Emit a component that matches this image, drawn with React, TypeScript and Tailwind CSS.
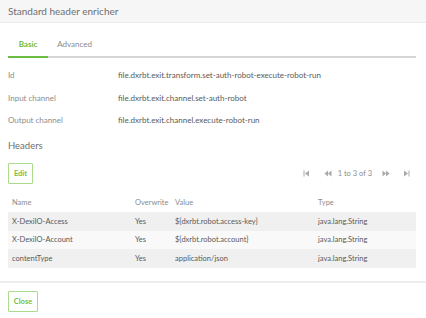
import React from "react";

const rows = [
  { name: "X-DexiIO-Access", ow: "Yes", value: "${dxrbt.robot.access-key}", type: "java.lang.String" },
  { name: "X-DexiIO-Account", ow: "Yes", value: "${dxrbt.robot.account}", type: "java.lang.String" },
  { name: "contentType", ow: "Yes", value: "application/json", type: "java.lang.String" },
];

const First = () => (
  <svg width="7" height="7" viewBox="0 0 7 7"><rect x="0.5" y="0.5" width="1" height="6" fill="#aaa" /><path d="M6 0.5 L2 3.5 L6 6.5 Z" fill="#aaa" /></svg>
);
const Prev = () => (
  <svg width="8" height="7" viewBox="0 0 8 7"><path d="M4 0.5 L0.5 3.5 L4 6.5 Z" fill="#aaa" /><path d="M7.5 0.5 L4 3.5 L7.5 6.5 Z" fill="#aaa" /></svg>
);
const Next = () => (
  <svg width="8" height="7" viewBox="0 0 8 7"><path d="M0.5 0.5 L4 3.5 L0.5 6.5 Z" fill="#aaa" /><path d="M4 0.5 L7.5 3.5 L4 6.5 Z" fill="#aaa" /></svg>
);
const Last = () => (
  <svg width="7" height="7" viewBox="0 0 7 7"><path d="M1 0.5 L5 3.5 L1 6.5 Z" fill="#aaa" /><rect x="5.5" y="0.5" width="1" height="6" fill="#aaa" /></svg>
);

export default function App() {
  return (
    <div className="w-[426px] h-[318px] bg-white overflow-hidden" style={{ fontFamily: "Lato, 'Noto Sans', sans-serif" }}>
      <div className="h-[23px] bg-[#f6f6f6] border-b border-[#ebebeb] flex items-center px-[8px] text-[10px] text-[#6f6f6f]">
        Standard header enricher
      </div>
      <div className="px-[8px]">
        <div className="flex h-[35px] items-end border-b-2 border-[#d6d6d6] w-[408px]">
          <div className="w-[40px] flex justify-center pb-[6px] text-[8px] font-bold text-[#6cbd45] relative">
            Basic
            <div className="absolute left-0 right-0 bottom-[-2px] h-[2px] bg-[#6cbd45]" />
          </div>
          <div className="w-[53px] flex justify-center pb-[6px] text-[8px] text-[#8a8a8a]">Advanced</div>
        </div>
        <div className="mt-[6px] flex flex-col text-[8px]">
          {[
            ["Id", "file.dxrbt.exit.transform.set-auth-robot-execute-robot-run"],
            ["Input channel", "file.dxrbt.exit.channel.set-auth-robot"],
            ["Output channel", "file.dxrbt.exit.channel.execute-robot-run"],
          ].map(([k, v]) => (
            <div key={k} className="flex h-[22.5px] items-center">
              <div className="w-[110px] text-[#8c8c8c]">{k}</div>
              <div className="text-[#5a5a5a]">{v}</div>
            </div>
          ))}
        </div>
        <div className="mt-[7.5px] text-[9.5px] text-[#6f6f6f] h-[14px] flex items-center">Headers</div>
        <div className="mt-[10px] flex items-center justify-between w-[408px]">
          <div className="w-[25px] h-[21px] border border-[#a9da8d] rounded-[1px] flex items-center justify-center text-[7.5px] font-bold text-[#72c04a]">Edit</div>
          <div className="flex items-center text-[7.5px] text-[#8c8c8c] pr-[6px]">
            <First />
            <div className="w-[14px]" />
            <Prev />
            <div className="w-[6px]" />
            <span>1 to 3 of 3</span>
            <div className="w-[10px]" />
            <Next />
            <div className="w-[13px]" />
            <Last />
          </div>
        </div>
        <div className="mt-[9px] w-[408px] text-[7.5px]">
          <div className="flex h-[19px] items-center text-[#8c8c8c]">
            <div className="w-[127px] pl-[4px]">Name</div>
            <div className="w-[40px]">Overwrite</div>
            <div className="w-[143px]">Value</div>
            <div>Type</div>
          </div>
          {rows.map((r, i) => (
            <div key={r.name} className={"flex h-[18.5px] items-center text-[#5a5a5a] " + (i % 2 === 0 ? "bg-[#f0f0f0]" : "bg-[#f9f9f9]")}>
              <div className="w-[127px] pl-[4px]">{r.name}</div>
              <div className="w-[40px]">{r.ow}</div>
              <div className="w-[143px]">{r.value}</div>
              <div>{r.type}</div>
            </div>
          ))}
        </div>
      </div>
      <div className="mt-[13.5px] border-t-2 border-[#ececec] px-[8px] pt-[8px]">
        <div className="w-[30px] h-[21px] border border-[#a9da8d] rounded-[1px] flex items-center justify-center text-[7.5px] font-bold text-[#72c04a]">Close</div>
      </div>
    </div>
  );
}
